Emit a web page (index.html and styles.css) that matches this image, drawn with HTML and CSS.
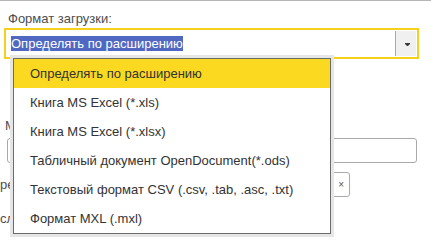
FILE: index.html
```html
<!DOCTYPE html>
<html lang="ru">
<head>
<meta charset="UTF-8">
<title>Формат загрузки</title>
<link rel="stylesheet" href="styles.css">
</head>
<body>
<div class="form">
  <div class="field-label">Формат загрузки:</div>

  <div class="combo">
    <div class="combo-text"><span class="selected-text">Определять по расширению</span></div>
    <div class="combo-btn">
      <svg width="5" height="4" viewBox="0 0 5 4"><path d="M0 0h5v1L3 3H2L0 1z" fill="#3a3a3a"/></svg>
    </div>
  </div>

  <div class="under">
    <div class="under-label">М</div>
    <div class="under-input"></div>
    <div class="under-row">
      <span class="under-text">ре</span>
      <div class="clear-box">×</div>
    </div>
    <div class="under-row">
      <span class="under-text">сл</span>
    </div>
  </div>

  <ul class="dropdown">
    <li class="active">Определять по расширению</li>
    <li>Книга MS Excel (*.xls)</li>
    <li>Книга MS Excel (*.xlsx)</li>
    <li>Табличный документ OpenDocument(*.ods)</li>
    <li>Текстовый формат CSV (.csv, .tab, .asc, .txt)</li>
    <li>Формат MXL (.mxl)</li>
  </ul>
</div>
</body>
</html>
```

FILE: styles.css
```css
body {
  margin: 0;
  padding: 0;
  background-color: #fff;
  font-family: 'Liberation Sans', Arial, sans-serif;
  font-size: 13px;
  line-height: 15px;
  color: #333;
}

.form {
  position: relative;
  height: 242px;
  border-top: 1px solid #b5b5b5;
  overflow: hidden;
}

.field-label {
  color: #4d4d4d;
  padding: 10px 0 0 8px;
}

.combo {
  display: flex;
  margin: 2px 0 0 4px;
  width: 411px;
  height: 27px;
  border: 2px solid #f7cf1d;
}

.combo-text {
  flex: 1;
  padding: 6px 0 0 5px;
}

.selected-text {
  background-color: #5168c2;
  color: #fff;
}

.combo-btn {
  width: 20px;
  margin: 1px 1px 1px 0;
  border-left: 1px solid #a9a9a9;
  background-color: #f0f0f0;
  display: flex;
  align-items: center;
  justify-content: center;
}

.combo-btn svg {
  display: block;
  margin: 2px 0 0 2px;
}

.under {
  padding-top: 59px;
}

.under-label {
  color: #4d4d4d;
  padding-left: 5px;
}

.under-input {
  margin: 5px 0 0 7px;
  width: 408px;
  height: 23px;
  border: 1px solid #a9a9a9;
  border-radius: 3px;
}

.under-row {
  display: flex;
  align-items: center;
  height: 25px;
  margin-top: 9px;
}

.under-text {
  color: #4d4d4d;
  width: 320px;
}

.clear-box {
  width: 30px;
  height: 25px;
  border: 1px solid #a9a9a9;
  border-radius: 0 3px 3px 0;
  font-size: 10px;
  color: #555;
  display: flex;
  align-items: center;
  justify-content: flex-end;
  padding-right: 5px;
  box-sizing: border-box;
}

.dropdown {
  position: absolute;
  top: 57px;
  left: 13px;
  width: 316px;
  margin: 0;
  padding: 0;
  list-style: none;
  border: 1px solid #6b6b6b;
  background-color: #fff;
  box-shadow: 0 0 0 3px #e6e6e6;
}

.dropdown li {
  height: 29px;
  line-height: 29px;
  padding-left: 16px;
  color: #333;
}

.dropdown li.active {
  background-color: #fad920;
}
```
